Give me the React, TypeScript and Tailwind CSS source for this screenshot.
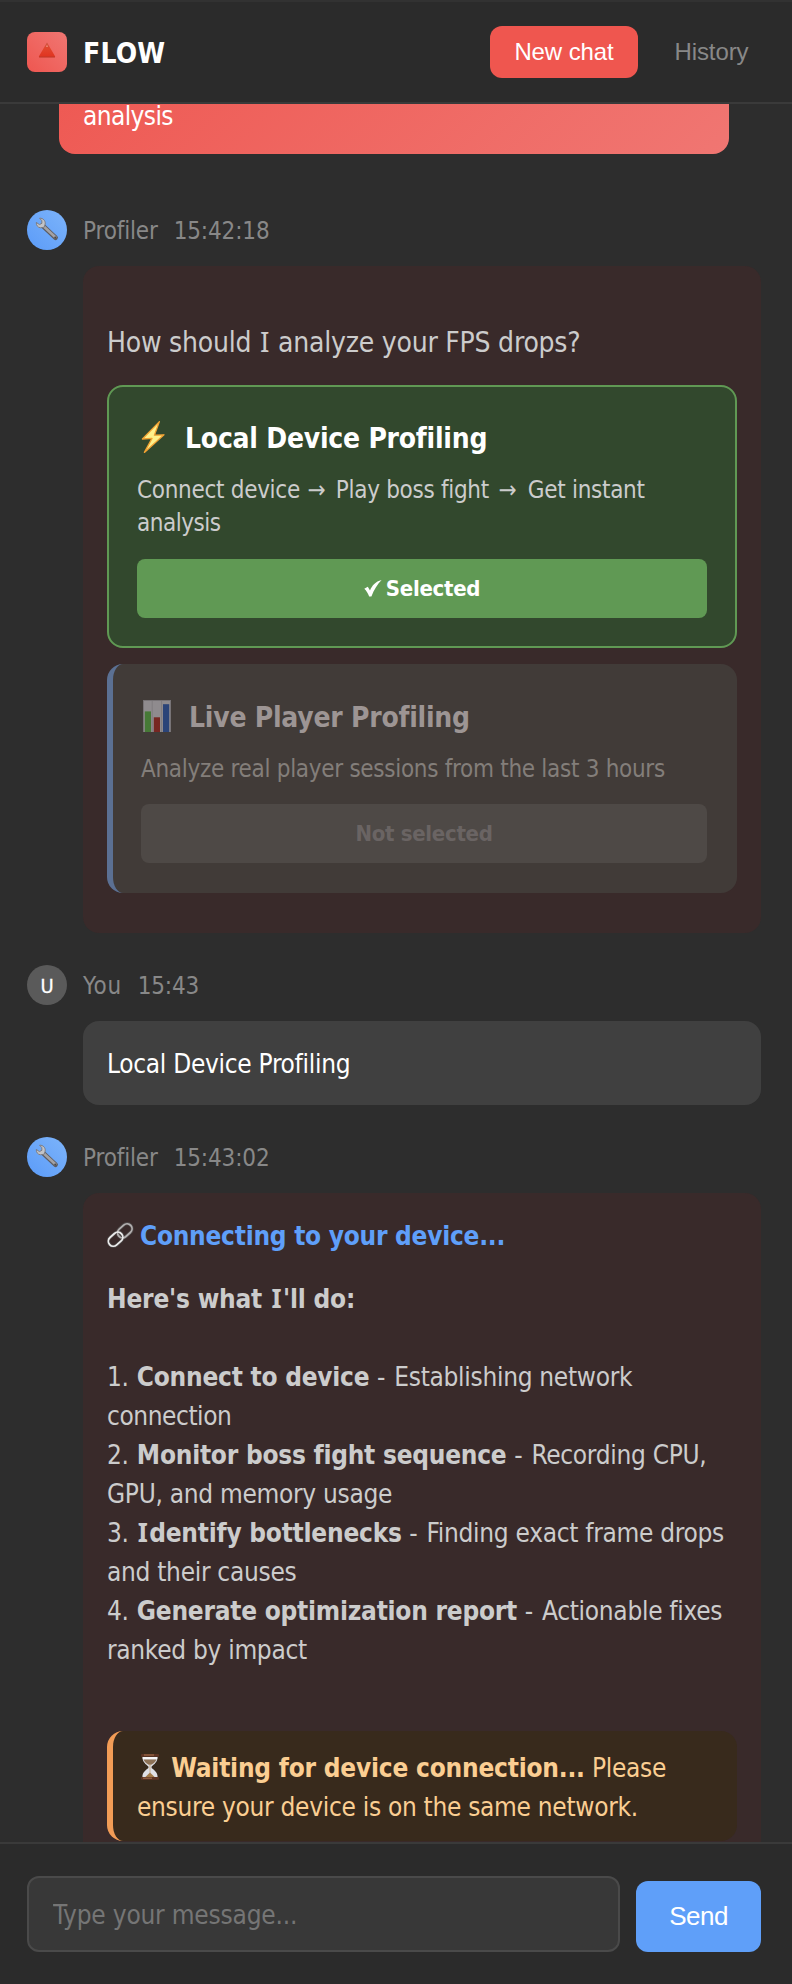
import type { ReactNode } from "react";

function SerifI({ className = "" }: { className?: string }) {
  return <span className={`font-['Noto_Sans'] leading-none ${className}`}>I</span>;
}

function Dash() {
  return <span className="mr-[2px] ml-[0.5px]">-</span>;
}

function TriangleIcon() {
  return (
    <svg className="size-10" viewBox="0 0 40 40">
      <defs>
        <linearGradient id="tri" x1="0" y1="0" x2="0" y2="1">
          <stop offset="0" stopColor="#c9523f" />
          <stop offset="0.4" stopColor="#e2452c" />
          <stop offset="1" stopColor="#e03320" />
        </linearGradient>
      </defs>
      <path d="M20 10.6 L28.2 24.4 Q28.2 25.2 27.4 25.2 H12.6 Q11.8 25.2 11.8 24.4 Z" fill="url(#tri)" />
      <path d="M12 25 H28" stroke="#b53a2c" strokeWidth="0.8" />
      <path d="M20 12.6 L21 15 H19 Z" fill="#ee8c78" />
    </svg>
  );
}

function WrenchIcon() {
  return (
    <svg className="size-10" viewBox="0 0 40 40">
      <path d="M15.5 15.5 L28.6 27.8" stroke="#5d5c60" strokeWidth="4.6" strokeLinecap="round" />
      <path d="M15.5 15.2 L28.4 27.2" stroke="#a3a2a5" strokeWidth="2.6" strokeLinecap="round" />
      <path
        d="M12.6 8.2 C16 8 18.6 10.6 18.2 14 L17.2 17.2 L13.6 17.8 C11 17.6 9 15.4 9.3 12.4 L12.4 14.6 L14.9 13.3 L14.8 10.7 Z"
        fill="#c3c4c8"
        stroke="#77777c"
        strokeWidth="0.9"
        strokeLinejoin="round"
      />
      <circle cx="28.3" cy="27.6" r="1.1" fill="#4c4a4c" />
    </svg>
  );
}

function BoltIcon() {
  return (
    <svg className="h-[42px] w-[35px]" viewBox="0 0 35 42">
      <path
        d="M22.4 4.6 L5.4 22 L15 21.4 L7.4 35.4 L27 17.8 L17.4 18.2 Z"
        fill="#fdf08a"
        stroke="#f0a132"
        strokeWidth="1.3"
        strokeLinejoin="round"
      />
    </svg>
  );
}

function ChartIcon() {
  return (
    <svg className="h-[42px] w-[35px]" viewBox="0 0 35 42">
      <rect x="2" y="3" width="28" height="32" fill="#777376" />
      <rect x="3" y="4" width="26" height="31" fill="#8f8b8e" />
      <path d="M11.2 4 V35 M20.6 4 V35" stroke="#807c7f" strokeWidth="1" />
      <rect x="3.8" y="14.4" width="6.2" height="20.6" fill="#467936" />
      <rect x="12.8" y="20.3" width="6.2" height="14.7" fill="#772722" />
      <rect x="22" y="7.2" width="6.2" height="27.8" fill="#2b4478" />
    </svg>
  );
}

function LinkIcon() {
  return (
    <svg className="-mt-1 h-[26px] w-[27px]" viewBox="0 0 27 26" fill="none">
      <g stroke="#4c4646" strokeWidth="3.4">
        <rect x="-8" y="-5" width="16" height="10" rx="5" transform="translate(17.8 8.8) rotate(-42)" />
        <rect x="-8" y="-5" width="16" height="10" rx="5" transform="translate(8.6 17.2) rotate(-42)" />
      </g>
      <g strokeWidth="1.8">
        <rect x="-8" y="-5" width="16" height="10" rx="5" transform="translate(17.8 8.8) rotate(-42)" stroke="#b3b0b0" />
        <rect x="-8" y="-5" width="16" height="10" rx="5" transform="translate(8.6 17.2) rotate(-42)" stroke="#ececec" />
      </g>
    </svg>
  );
}

function HourglassIcon() {
  return (
    <svg className="mr-px inline-block h-[26px] w-[26px] align-[-3px]" viewBox="0 0 26 26">
      <path d="M5.4 3 H20.6 C20.6 8 17 10.5 14.6 12.4 V14 C17 16 20.6 18 20.6 23 H5.4 C5.4 18 9 16 11.4 14 V12.4 C9 10.5 5.4 8 5.4 3 Z" fill="#dfe0e6" />
      <path d="M6.6 5.6 H19.4 C18.8 8.4 15.8 9.8 13 11.6 C10.2 9.8 7.2 8.4 6.6 5.6 Z" fill="#8d7257" />
      <path d="M5.8 4 H20.2" stroke="#ffffff" strokeWidth="1.4" />
      <path d="M13 18.4 L17.6 23 H8.4 Z" fill="#a37a48" />
      <path d="M13 10 V19" stroke="#c9b193" strokeWidth="1" />
      <rect x="4" y="0" width="18" height="2.8" rx="0.8" fill="#5d3524" />
      <rect x="7" y="0.4" width="10" height="1.2" fill="#9a6746" />
      <rect x="4" y="23" width="18" height="2.8" rx="0.8" fill="#5d3524" />
      <rect x="6" y="23.6" width="9" height="1.2" fill="#9a6746" />
    </svg>
  );
}

function CheckIcon() {
  return (
    <svg className="h-[17px] w-[18px]" viewBox="0 0 18 17" fill="#fff">
      <path d="M0.3 8.8 L3.8 6.8 L6 10.4 C8.2 5.4 11.4 1.6 17.6 0 C13.6 4 10 9.6 7.4 16.6 H5.2 C4 13.4 2.4 10.8 0.3 8.8 Z" />
    </svg>
  );
}

function Author({ avatar, name, time }: { avatar: ReactNode; name: ReactNode; time: string }) {
  return (
    <div className="flex h-10 items-center gap-4 text-[24px] tracking-[-0.15px] text-[#888888]">
      {avatar}
      <div className="flex gap-4 pt-[2px]">
        <span>{name}</span>
        <span>{time}</span>
      </div>
    </div>
  );
}

const profilerAvatar = (
  <div className="size-10 rounded-full bg-linear-45 from-[#5b9bf8] to-[#7db4fa]">
    <WrenchIcon />
  </div>
);

export default function App() {
  return (
    <div className="flex h-[1984px] w-[792px] flex-col overflow-hidden bg-[#2d2d2d] font-['DejaVu_Sans_Condensed','DejaVu_Sans',sans-serif] tracking-[-0.3px] whitespace-nowrap">
      <header className="flex h-[104px] shrink-0 items-center border-y-2 border-t-[#323232] border-b-[#3a3a3a] bg-[#2b2b2b] pr-[19px] pl-[27px]">
        <div className="size-10 rounded-lg bg-linear-45 from-[#ee5650] to-[#f07672]">
          <TriangleIcon />
        </div>
        <h1 className="mt-[3px] ml-4 text-[28px] leading-[42px] font-bold tracking-[0.2px] text-white">FLOW</h1>
        <nav className="ml-auto flex gap-3 font-['Liberation_Sans',Arial,sans-serif] text-[24px] tracking-[-0.1px]">
          <button className="h-[52px] w-[148px] rounded-xl bg-[#ef564f] pb-px text-white">New chat</button>
          <button className="h-[52px] w-[123px] pb-px text-[#888888]">History</button>
        </nav>
      </header>

      <main className="flex h-[1738px] shrink-0 flex-col overflow-hidden pr-[31px] pl-[27px]">
        <div className="-mt-[86px] mr-8 ml-8 flex h-[136px] shrink-0 flex-col justify-end rounded-2xl bg-linear-135 from-[#ee5650] to-[#f07672] px-6 pb-[18px] text-[26px] leading-[39px] text-white">
          <p className="tracking-[-0.6px]">analysis</p>
        </div>

        <div className="mt-14">
          <Author avatar={profilerAvatar} name="Profiler" time="15:42:18" />
          <section className="mt-4 ml-14 h-[667px] rounded-2xl bg-[#392a2a] px-6 pt-14 text-[#cccccc]">
            <p className="text-[28px] leading-[42px] tracking-[-0.22px]">
              How should <SerifI className="mx-px" /> analyze your FPS drops?
            </p>
            <div className="mt-[21px] rounded-2xl border-2 border-[#609954] bg-[#32482d] px-7 pt-[30px] pb-7">
              <div className="flex gap-[13px]">
                <BoltIcon />
                <h2 className="mt-px -mb-px text-[28px] leading-[42px] font-bold tracking-[-0.24px] text-white">Local Device Profiling</h2>
              </div>
              <p className="mt-[15px] text-[24px] leading-[33px]">
                Connect device <span className="mr-[4px] ml-px">→</span> Play boss fight <span className="mr-[5px] ml-[3px]">→</span> Get instant
                <br />
                <span className="tracking-[-0.5px]">analysis</span>
              </p>
              <button className="mt-[19px] flex h-[59px] w-full items-center justify-center gap-1 rounded-lg bg-[#609954] text-[22px] font-bold text-white">
                <CheckIcon />
                Selected
              </button>
            </div>
            <div className="mt-4 rounded-2xl border-l-6 border-[#5b7093] bg-[#413b38] pt-[33px] pr-[30px] pb-[30px] pl-7">
              <div className="flex gap-[13px]">
                <ChartIcon />
                <h2 className="text-[28px] leading-[42px] font-bold tracking-[-0.24px] text-[#9d9594]">Live Player Profiling</h2>
              </div>
              <p className="mt-[14px] text-[24px] leading-[33px] text-[#837e7a]">Analyze real player sessions from the last 3 hours</p>
              <button className="mt-[18px] h-[59px] w-full rounded-lg bg-[#4e4946] text-[22px] font-bold text-[#6a6463]">Not selected</button>
            </div>
          </section>
        </div>

        <div className="mt-8">
          <Author
            avatar={
              <div className="flex size-10 items-center justify-center rounded-full bg-[#5a5a5a] pt-px text-[20px] text-white [-webkit-text-stroke:0.3px_white]">
                U
              </div>
            }
            name={<span className="tracking-[0.6px]">You</span>}
            time="15:43"
          />
          <section className="mt-4 ml-14 flex h-[84px] items-center rounded-2xl bg-[#404040] px-6 pt-[2px] text-[26px] leading-[39px] text-white">
            Local Device Profiling
          </section>
        </div>

        <div className="mt-8">
          <Author avatar={profilerAvatar} name="Profiler" time="15:43:02" />
          <section className="mt-4 ml-14 h-[700px] rounded-2xl bg-[#392a2a] px-6 pt-6 text-[26px] leading-[39px] text-[#cccccc]">
            <h3 className="flex items-center gap-[6px] font-bold tracking-[-0.26px] text-[#5f9ff9]">
              <LinkIcon />
              Connecting to your device...
            </h3>
            <p className="mt-6 tracking-[-0.2px]">
              <b>
                Here's what <SerifI className="mx-[1.5px]" />
                'll do:
              </b>
            </p>
            <ol className="mt-[39px] [&_b]:ml-px [&_b]:tracking-[-0.24px]">
              <li>
                1. <b>Connect to device</b> <Dash /> Establishing network
                <br />
                <span className="tracking-[-0.45px]">connection</span>
              </li>
              <li>
                2. <b>Monitor boss fight sequence</b> <Dash /> Recording CPU,
                <br />
                GPU, and memory usage
              </li>
              <li>
                3.{" "}
                <b>
                  <SerifI className="mr-[1.5px] ml-px" />
                  dentify bottlenecks
                </b>{" "}
                <Dash /> Finding exact frame drops
                <br />
                and their causes
              </li>
              <li>
                4. <b>Generate optimization report</b> <Dash /> Actionable fixes
                <br />
                ranked by impact
              </li>
            </ol>
            <div className="mt-[61px] h-[110px] rounded-2xl border-l-6 border-[#f29c56] bg-[#382a1c] pt-[18px] pl-6 text-[#fbce92]">
              <HourglassIcon /> <b className="tracking-[-0.22px]">Waiting for device connection...</b> Please
              <br />
              ensure your device is on the same network.
            </div>
          </section>
        </div>
      </main>

      <footer className="flex h-[142px] shrink-0 items-end gap-4 border-t-2 border-[#3a3a3a] bg-[#2b2b2b] pr-[31px] pb-8 pl-[27px]">
        <input
          className="h-[76px] w-[593px] rounded-xl border-2 border-[#4a4a4a] bg-[#383838] px-6 pt-[2px] text-[26px] tracking-[-0.2px] placeholder:text-[#757575]"
          placeholder="Type your message..."
        />
        <button className="h-[71px] w-[125px] rounded-xl bg-[#5f9ff9] pb-px font-['Liberation_Sans',Arial,sans-serif] text-[26px] tracking-[-0.5px] text-white">
          Send
        </button>
      </footer>
    </div>
  );
}
